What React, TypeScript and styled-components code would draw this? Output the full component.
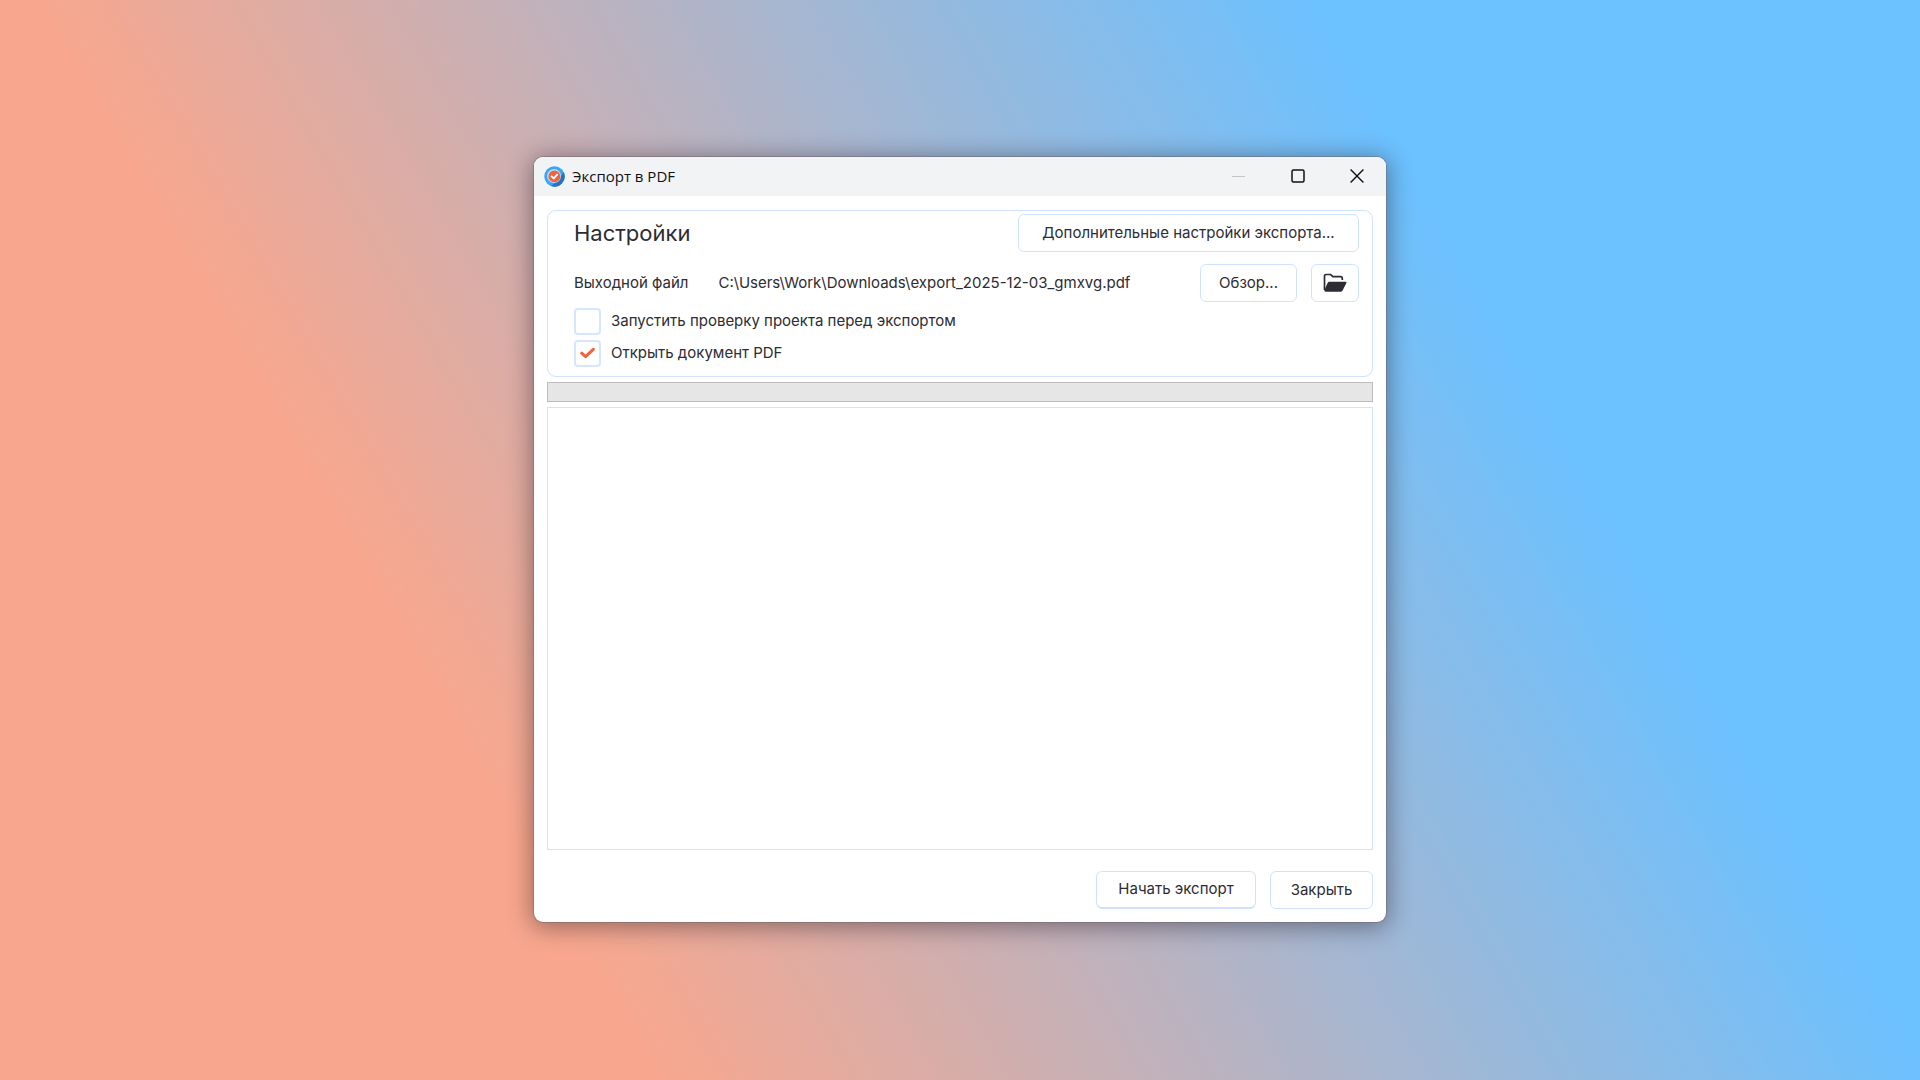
import React, { useState } from "react";
import styled, { createGlobalStyle } from "styled-components";

const line = "#cfe2ff";
const ink = "#2d2c33";

const GlobalStyle = createGlobalStyle`
  *, *::before, *::after { box-sizing: border-box; }
  body { margin: 0; }
  button, input, textarea { font: inherit; color: inherit; }
`;

const Desktop = styled.main`
  min-height: 100vh;
  display: flex;
  align-items: center;
  justify-content: center;
  padding-bottom: 2px;
  background: linear-gradient(60deg, #f8a78e 26%, #6cc1ff 76%);
  font-family: Inter, "Liberation Sans", sans-serif;
  font-size: 15px;
  line-height: 20px;
  color: ${ink};
`;

const Dialog = styled.section`
  width: 852px;
  max-width: 100%;
  border-radius: 9px;
  overflow: hidden;
  background: #fff;
  box-shadow: 0 0 0 1px rgba(110, 100, 105, 0.45), 0 3px 24px 2px rgba(20, 10, 20, 0.42);
`;

const TitleBar = styled.header`
  height: 39px;
  display: flex;
  align-items: center;
  padding-left: 10px;
  background: #f2f3f5;
`;

const Title = styled.h1`
  flex: 1;
  margin: 0 0 0 7px;
  font: 400 15px/20px "Open Sans", "Noto Sans", sans-serif;
  color: #111;
`;

const CaptionButton = styled.button`
  width: 59px;
  height: 38px;
  padding: 0;
  border: 0;
  background: none;
  display: grid;
  place-items: center;
  align-self: flex-start;
  color: #111;

  &:disabled { color: #c4c4c6; }
`;

const Body = styled.div`
  display: flex;
  flex-direction: column;
  gap: 5px;
  padding: 14px 13px 13px;
`;

const Settings = styled.section`
  display: flex;
  flex-direction: column;
  border: 1px solid ${line};
  border-radius: 9px;
  padding: 3px 13px 9px 26px;
`;

const Row = styled.div`
  display: flex;
  align-items: center;
  gap: 14px;
  margin-bottom: 12px;
`;

const Heading = styled.h2`
  flex: 1;
  margin: 0;
  font-size: 22px;
  line-height: 28px;
  font-weight: 400;
`;

const Button = styled.button<{ $primary?: boolean; $icon?: boolean; $minWidth?: number }>`
  height: 38px;
  min-width: ${(p) => p.$minWidth ?? 0}px;
  padding: 0 ${(p) => (p.$icon ? 11 : 18)}px;
  border: 1px solid ${line};
  border-bottom-width: ${(p) => (p.$primary ? 2 : 1)}px;
  border-radius: 6px;
  background: #fff;
  display: inline-flex;
  align-items: center;
  justify-content: center;
  white-space: nowrap;
`;

const PathField = styled.input`
  flex: 1;
  min-width: 0;
  margin-left: 16px;
  padding: 0;
  border: 0;
  outline: 0;
  background: none;
`;

const Options = styled.div`
  display: flex;
  flex-direction: column;
  gap: 5px;
  margin-top: -6px;
`;

const Option = styled.label`
  display: flex;
  align-items: center;
  gap: 10px;
`;

const Tick = styled.input`
  appearance: none;
  width: 27px;
  height: 27px;
  margin: 0;
  border: 2px solid #d6e6ff;
  border-radius: 4px;
  background: #fff;
`;

const TickBox = styled.span`
  display: grid;

  > * { grid-area: 1 / 1; place-self: center; }
  > svg { pointer-events: none; }
`;

const Progress = styled.progress`
  appearance: none;
  display: block;
  width: 100%;
  height: 20px;
  border: 1px solid #bcbcbc;
  background: #e6e6e6;

  &::-webkit-progress-bar { background: #e6e6e6; }
  &::-webkit-progress-value { background: #06b025; }
`;

const Log = styled.textarea`
  display: block;
  width: 100%;
  height: 443px;
  border: 1px solid ${line};
  outline: 0;
  resize: none;
  background: #fff;
`;

const Footer = styled.footer`
  display: flex;
  justify-content: flex-end;
  gap: 14px;
  margin-top: 16px;
`;

const Logo = () => (
  <svg width="21" height="21" viewBox="0 0 21 21" aria-hidden="true">
    <circle cx="10.5" cy="10.5" r="10.2" fill="#35a6f8" />
    <path d="M19.6 6A10.2 10.2 0 0 1 7 20.1L14 15Z" fill="#2a6fc0" />
    <circle cx="10" cy="10" r="7" fill="#b9dcfa" />
    <circle cx="10.4" cy="10.4" r="5.9" fill="#f0643c" />
    <path d="M7.6 10.4l2.1 2 3.5-3.7" fill="none" stroke="#fff" strokeWidth="1.9" strokeLinecap="round" strokeLinejoin="round" />
  </svg>
);

const FolderIcon = () => (
  <svg width="24" height="20" viewBox="0 0 24 20" aria-hidden="true">
    <path d="M1.5 17V3.2Q1.5 1.5 3.2 1.5H7.6L10 3.7H17.6Q19.3 3.7 19.3 5.4V7" fill="none" stroke={ink} strokeWidth="1.7" />
    <path d="M6.3 8.7H22.5Q24 8.7 23.4 10L19.6 17.6Q19 18.8 17.4 18.8H2.6Q1 18.8 1.4 17L4.7 9.7Q5.1 8.7 6.3 8.7Z" fill={ink} />
  </svg>
);

function CheckOption({ text, initial }: { text: string; initial: boolean }) {
  const [checked, setChecked] = useState(initial);
  return (
    <Option>
      <TickBox>
        <Tick type="checkbox" checked={checked} onChange={() => setChecked(!checked)} />
        {checked && (
          <svg width="15" height="12" viewBox="0 0 15 12" aria-hidden="true">
            <path d="M1.7 6.2l3.9 3.5 7.7-7.4" fill="none" stroke="#f0643c" strokeWidth="3" strokeLinecap="round" strokeLinejoin="round" />
          </svg>
        )}
      </TickBox>
      {text}
    </Option>
  );
}

export default function App() {
  return (
    <Desktop>
      <GlobalStyle />
      <Dialog role="dialog" aria-labelledby="dialog-title">
        <TitleBar>
          <Logo />
          <Title id="dialog-title">Экспорт в PDF</Title>
          <CaptionButton disabled aria-label="Свернуть">
            <svg width="14" height="14" viewBox="0 0 14 14"><path d="M0 7.5H13" stroke="currentColor" /></svg>
          </CaptionButton>
          <CaptionButton aria-label="Развернуть">
            <svg width="14" height="14" viewBox="0 0 14 14"><rect x="1" y="1" width="12" height="12" rx="1.5" fill="none" stroke="currentColor" strokeWidth="1.5" /></svg>
          </CaptionButton>
          <CaptionButton aria-label="Закрыть окно">
            <svg width="14" height="14" viewBox="0 0 14 14"><path d="M.6.6l12.8 12.8M13.4.6L.6 13.4" stroke="currentColor" strokeWidth="1.4" /></svg>
          </CaptionButton>
        </TitleBar>
        <Body>
          <Settings>
            <Row>
              <Heading>Настройки</Heading>
              <Button $minWidth={341}>Дополнительные настройки экспорта...</Button>
            </Row>
            <Row>
              <label htmlFor="output-file">Выходной файл</label>
              <PathField id="output-file" readOnly value="C:\Users\Work\Downloads\export_2025-12-03_gmxvg.pdf" />
              <Button>Обзор...</Button>
              <Button $icon aria-label="Открыть папку"><FolderIcon /></Button>
            </Row>
            <Options>
              <CheckOption text="Запустить проверку проекта перед экспортом" initial={false} />
              <CheckOption text="Открыть документ PDF" initial={true} />
            </Options>
          </Settings>
          <Progress value={0} max={100} aria-label="Ход экспорта" />
          <Log readOnly aria-label="Журнал экспорта" />
          <Footer>
            <Button $primary $minWidth={160}>Начать экспорт</Button>
            <Button $minWidth={103}>Закрыть</Button>
          </Footer>
        </Body>
      </Dialog>
    </Desktop>
  );
}
